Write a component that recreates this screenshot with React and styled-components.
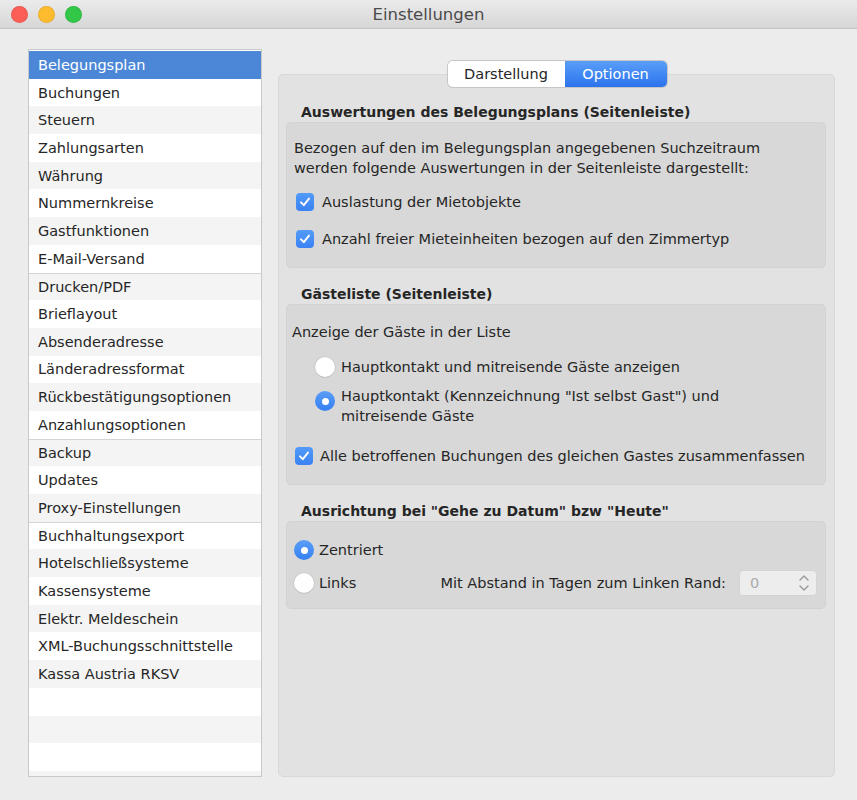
import React from 'react';
import styled, { createGlobalStyle } from 'styled-components';

const GlobalStyle = createGlobalStyle`
  html, body {
    margin: 0;
    padding: 0;
    background: #ececec;
  }
  body {
    font-family: 'DejaVu Sans', 'Liberation Sans', sans-serif;
    font-size: 14px;
    color: #262626;
  }
`;

const Window = styled.div`
  width: 857px;
  height: 800px;
  display: flex;
  flex-direction: column;
  background: #ececec;
  overflow: hidden;
`;

const TitleBar = styled.div`
  height: 28px;
  flex: 0 0 28px;
  display: flex;
  align-items: center;
  position: relative;
  background: linear-gradient(#ebebeb, #d6d6d6);
  border-bottom: 1px solid #c4c4c4;
`;

const Lights = styled.div`
  display: flex;
  gap: 10px;
  padding-left: 11px;
`;

const Light = styled.span`
  width: 17px;
  height: 17px;
  border-radius: 50%;
  background: ${({ $c }) => $c};
  box-shadow: inset 0 0 0 1px rgba(0, 0, 0, 0.08);
`;

const Title = styled.div`
  position: absolute;
  left: 0;
  right: 0;
  top: 5px;
  text-align: center;
  font-size: 16.5px;
  color: #4a4a4a;
  pointer-events: none;
`;

const Body = styled.div`
  flex: 1;
  min-height: 0;
  display: flex;
  padding: 20px 22px 23px 28px;
  gap: 16px;
`;

const Sidebar = styled.div`
  width: 232px;
  flex: 0 0 232px;
  border: 1px solid #c9c9c9;
  background: #fff;
  overflow: hidden;
  padding-top: 1px;
`;

const Row = styled.div`
  height: 27.7px;
  box-sizing: border-box;
  display: flex;
  align-items: center;
  padding-left: 9px;
  font-size: 14.5px;
  color: ${({ $sel }) => ($sel ? '#fff' : '#262626')};
  background: ${({ $sel, $odd }) => ($sel ? '#4c87d7' : $odd ? '#f4f4f4' : '#fff')};
  border-top: ${({ $sep }) => ($sep ? '1px solid #d4d4d4' : 'none')};
`;

const Right = styled.div`
  flex: 1;
  display: flex;
  flex-direction: column;
  padding-top: 12px;
`;

const Segments = styled.div`
  align-self: center;
  display: flex;
  position: relative;
  z-index: 1;
  height: 26px;
  border-radius: 5px;
  box-shadow: 0 0 0 1px #c6c6c6, 0 1px 1px rgba(0, 0, 0, 0.08);
  overflow: hidden;
  margin-left: 1px;
`;

const Segment = styled.div`
  display: flex;
  align-items: center;
  justify-content: center;
  width: ${({ $w }) => $w}px;
  font-size: 14.5px;
  color: ${({ $on }) => ($on ? '#fff' : '#262626')};
  background: ${({ $on }) => ($on ? 'linear-gradient(#5a9ef8, #2b73ee)' : '#fff')};
`;

const Pane = styled.div`
  flex: 1;
  margin-top: -13px;
  background: #e2e2e2;
  border: 1px solid #d8d8d8;
  border-radius: 5px;
  padding: 27px 8px 0 7px;
  display: flex;
  flex-direction: column;
`;

const SectionTitle = styled.div`
  font-weight: bold;
  font-size: 14px;
  height: 20px;
  line-height: 20px;
  padding-left: 15px;
  margin-top: ${({ $mt }) => $mt || 0}px;
  color: #262626;
`;

const Group = styled.div`
  background: #d8d8d8;
  border-radius: 5px;
  border: 1px solid #d2d2d2;
  padding: ${({ $p }) => $p};
  display: flex;
  flex-direction: column;
`;

const Para = styled.div`
  font-size: 14.5px;
  line-height: 20px;
  color: #262626;
`;

const Option = styled.div`
  display: flex;
  align-items: ${({ $top }) => ($top ? 'flex-start' : 'center')};
  gap: ${({ $gap }) => $gap ?? 7}px;
  margin-left: ${({ $ml }) => $ml || 0}px;
  margin-top: ${({ $mt }) => $mt || 0}px;
  font-size: 14.5px;
  line-height: 20px;
  color: #262626;
`;

const Box = styled.span`
  width: 18px;
  height: 18px;
  flex: 0 0 18px;
  border-radius: 4px;
  background: linear-gradient(#529bf8, #3a82f3);
  display: flex;
  align-items: center;
  justify-content: center;
`;

const Radio = styled.span`
  width: 20px;
  height: 20px;
  flex: 0 0 20px;
  border-radius: 50%;
  box-sizing: border-box;
  display: flex;
  align-items: center;
  justify-content: center;
  margin-top: ${({ $mt }) => $mt || 0}px;
  background: ${({ $on }) => ($on ? 'linear-gradient(#5a9ef8, #3580f2)' : '#fff')};
  box-shadow: ${({ $on }) => ($on ? 'none' : '0 0 0 0.5px #bdbdbd, 0 0.5px 1px rgba(0,0,0,0.15)')};
  &::after {
    content: '';
    display: ${({ $on }) => ($on ? 'block' : 'none')};
    width: 7px;
    height: 7px;
    border-radius: 50%;
    background: #fff;
  }
`;

const Spacer = styled.div`
  flex: 1;
`;

const Spin = styled.div`
  width: 78px;
  height: 26px;
  box-sizing: border-box;
  border-radius: 4px;
  background: #ededed;
  border: 1px solid #d4d4d4;
  display: flex;
  align-items: center;
  justify-content: space-between;
  padding: 0 6px 0 10px;
  color: #ababab;
  margin-left: 8px;
`;

const Check = () => (
  <Box>
    <svg width="12" height="12" viewBox="0 0 12 12">
      <path d="M2 6.3 L4.8 9.2 L10 2.6" fill="none" stroke="#fff" strokeWidth="1.9" strokeLinecap="round" strokeLinejoin="round" />
    </svg>
  </Box>
);

const Stepper = () => (
  <svg width="12" height="20" viewBox="0 0 12 20">
    <path d="M2 7 L6 3 L10 7" fill="none" stroke="#9a9a9a" strokeWidth="1.4" strokeLinecap="round" strokeLinejoin="round" />
    <path d="M2 13 L6 17 L10 13" fill="none" stroke="#9a9a9a" strokeWidth="1.4" strokeLinecap="round" strokeLinejoin="round" />
  </svg>
);

const items = [
  'Belegungsplan', 'Buchungen', 'Steuern', 'Zahlungsarten', 'Währung', 'Nummernkreise',
  'Gastfunktionen', 'E-Mail-Versand', 'Drucken/PDF', 'Brieflayout', 'Absenderadresse',
  'Länderadressformat', 'Rückbestätigungsoptionen', 'Anzahlungsoptionen', 'Backup', 'Updates',
  'Proxy-Einstellungen', 'Buchhaltungsexport', 'Hotelschließsysteme', 'Kassensysteme',
  'Elektr. Meldeschein', 'XML-Buchungsschnittstelle', 'Kassa Austria RKSV',
  '', '', '', '',
];
const separators = [8, 14, 17];

export default function App() {
  return (
    <Window>
      <GlobalStyle />
      <TitleBar>
        <Lights>
          <Light $c="#fc5f57" />
          <Light $c="#fdbc2e" />
          <Light $c="#33c748" />
        </Lights>
        <Title>Einstellungen</Title>
      </TitleBar>
      <Body>
        <Sidebar>
          {items.map((t, i) => (
            <Row key={i} $sel={i === 0} $odd={i % 2 === 0} $sep={separators.includes(i)}>
              {t}
            </Row>
          ))}
        </Sidebar>
        <Right>
          <Segments>
            <Segment $w={117}>Darstellung</Segment>
            <Segment $w={102} $on>Optionen</Segment>
          </Segments>
          <Pane>
            <SectionTitle>Auswertungen des Belegungsplans (Seitenleiste)</SectionTitle>
            <Group $p="15px 8px 18px 7px">
              <Para>
                Bezogen auf den im Belegungsplan angegebenen Suchzeitraum<br />
                werden folgende Auswertungen in der Seitenleiste dargestellt:
              </Para>
              <Option $ml={2} $mt={14} $gap={8}>
                <Check />
                Auslastung der Mietobjekte
              </Option>
              <Option $ml={2} $mt={17} $gap={8}>
                <Check />
                Anzahl freier Mieteinheiten bezogen auf den Zimmertyp
              </Option>
            </Group>

            <SectionTitle $mt={16}>Gästeliste (Seitenleiste)</SectionTitle>
            <Group $p="17px 8px 18px 5px">
              <Para>Anzeige der Gäste in der Liste</Para>
              <Option $ml={23} $mt={15} $gap={6}>
                <Radio />
                Hauptkontakt und mitreisende Gäste anzeigen
              </Option>
              <Option $ml={23} $mt={9} $gap={6} $top>
                <Radio $on $mt={5} />
                <span>
                  Hauptkontakt (Kennzeichnung "Ist selbst Gast") und<br />
                  mitreisende Gäste
                </span>
              </Option>
              <Option $ml={3} $mt={20} $gap={7}>
                <Check />
                Alle betroffenen Buchungen des gleichen Gastes zusammenfassen
              </Option>
            </Group>

            <SectionTitle $mt={16}>Ausrichtung bei "Gehe zu Datum" bzw "Heute"</SectionTitle>
            <Group $p="18px 8px 12px 7px">
              <Option $gap={5}>
                <Radio $on />
                Zentriert
              </Option>
              <Option $gap={5} $mt={10}>
                <Radio />
                Links
                <Spacer />
                Mit Abstand in Tagen zum Linken Rand:
                <Spin>
                  0
                  <Stepper />
                </Spin>
              </Option>
            </Group>
          </Pane>
        </Right>
      </Body>
    </Window>
  );
}
